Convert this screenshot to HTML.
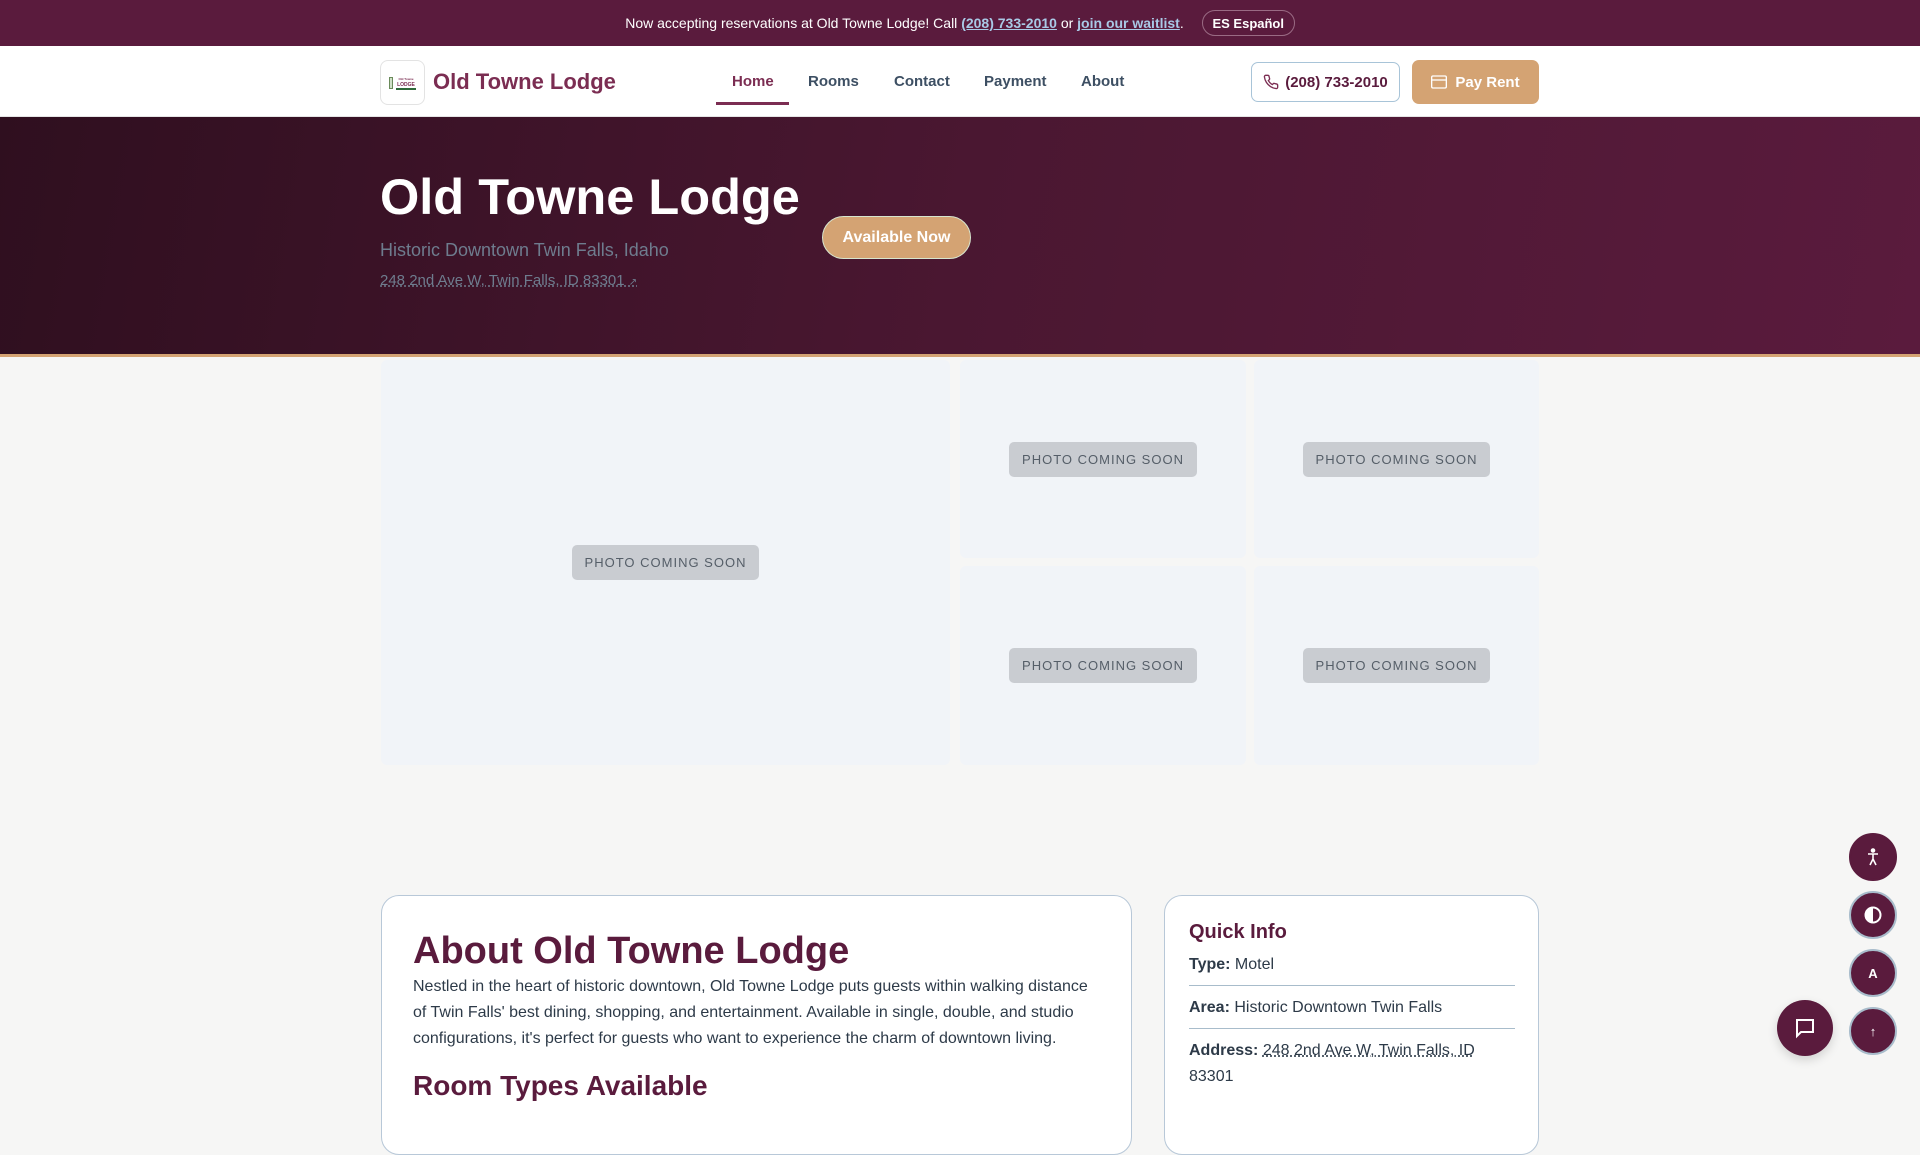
<!DOCTYPE html>
<html><head><meta charset="utf-8"><style>
*{box-sizing:border-box;margin:0;padding:0}
body{width:1920px;height:1080px;overflow:hidden;background:#f6f6f5;font-family:"Liberation Sans",sans-serif;position:relative}
.top{height:46px;background:#5a1b3d;color:#fff;font-size:14px;display:flex;align-items:center;justify-content:center;gap:18px}
.top a{color:#a9c9e6;font-weight:700;text-decoration:underline}
.es{width:93px;height:26px;border:1px solid #9a6b84;border-radius:13px;font-size:13px;font-weight:700;display:flex;align-items:center;justify-content:center}
.nav{height:71px;background:#fff;position:relative;border-bottom:1px solid #e5e5e5}
.logo{position:absolute;left:380px;top:14px;width:45px;height:45px;border:1px solid #e3e3e3;border-radius:8px;display:flex;align-items:center;justify-content:center;gap:3px}
.brand{position:absolute;left:433px;top:23px;font-size:22px;font-weight:700;color:#7b2d52}
.nl{position:absolute;top:27px;font-size:15px;font-weight:700;color:#3d4f63}
.home{color:#7b2d52}
.ul{position:absolute;left:716px;top:56px;width:73px;height:3px;background:#7b2d52}
.ph{position:absolute;left:1251px;top:16px;width:149px;height:40px;border:1px solid #a8c4d8;border-radius:7px;color:#5a1b3d;font-size:15px;font-weight:700;display:flex;align-items:center;justify-content:center;gap:6px}
.pay{position:absolute;left:1412px;top:14px;width:127px;height:44px;background:#d4a373;border-radius:7px;color:#fff;font-size:15px;font-weight:700;display:flex;align-items:center;justify-content:center;gap:8px}
.hero{position:absolute;top:117px;left:0;width:1920px;height:240px;background:linear-gradient(100deg,#2f0f1f 0%,#4a1731 50%,#5a1b3d 100%);border-bottom:3px solid #d4a373}
.hero h1{position:absolute;left:380px;top:50px;font-size:50.5px;color:#fff;font-weight:700}
.sub{position:absolute;left:380px;top:123px;font-size:18px;color:#6e7c8e}
.addr{position:absolute;left:380px;top:155px;font-size:15px;color:#6e7c8e;text-decoration:underline dotted}
.avail{position:absolute;left:822px;top:99px;width:149px;height:43px;border-radius:22px;background:#d4a373;border:1px solid #d7e6cf;color:#fff;font-size:16px;font-weight:700;display:flex;align-items:center;justify-content:center}
.tile{position:absolute;background:#f1f4f8;border-radius:6px;display:flex;align-items:center;justify-content:center}
.badge{background:#c9ccd1;color:#555e68;font-size:13px;letter-spacing:1px;padding:10px 13px;border-radius:5px}
.card{position:absolute;background:#fff;border:1px solid #b8c8d8;border-radius:18px}
.ab h2{position:absolute;left:31px;top:34px;font-size:38px;color:#5a1b3d}
.ab p{position:absolute;left:31px;top:78px;width:690px;font-size:16px;line-height:26px;color:#2d3a48}
.ab h3{position:absolute;left:31px;top:174px;font-size:28px;color:#5a1b3d}
.qi{font-size:16px;color:#2d3a48}
.fb{position:absolute;left:1849px;width:48px;height:48px;border-radius:50%;background:#5a1b3d;border:2px solid #a8bccb;color:#fff;display:flex;align-items:center;justify-content:center;font-size:13px;font-weight:700}
</style></head><body>
<div class="top"><span>Now accepting reservations at Old Towne Lodge! Call <a>(208) 733-2010</a> or <a>join our waitlist</a>.</span><div class="es">ES Español</div></div>
<div class="nav">
<div class="logo"><span style="width:4px;height:12px;background:#cfe0c8;border:1px solid #6a8a5a"></span><span style="display:flex;flex-direction:column;align-items:center;font-size:5px;color:#7b2d52;font-weight:700;line-height:6px"><span style="font-size:3px">Old Towne</span>LODGE<span style="width:20px;height:2px;background:#2f6a3a"></span></span></div>
<div class="brand">Old Towne Lodge</div>
<div class="nl home" style="left:732px">Home</div>
<div class="nl" style="left:808px">Rooms</div>
<div class="nl" style="left:894px">Contact</div>
<div class="nl" style="left:984px">Payment</div>
<div class="nl" style="left:1081px">About</div>
<div class="ul"></div>
<div class="ph"><svg width="16" height="16" viewBox="0 0 24 24" fill="none" stroke="#7b2d52" stroke-width="2"><path d="M22 16.9v3a2 2 0 0 1-2.2 2 19.8 19.8 0 0 1-8.6-3.1 19.5 19.5 0 0 1-6-6A19.8 19.8 0 0 1 2.1 4.2 2 2 0 0 1 4.1 2h3a2 2 0 0 1 2 1.7c.1.9.4 1.9.7 2.8a2 2 0 0 1-.5 2.1L8 9.900a16 16 0 0 0 6 6l1.3-1.3a2 2 0 0 1 2.1-.4c.9.3 1.8.6 2.8.7a2 2 0 0 1 1.7 2z"/></svg>(208) 733-2010</div>
<div class="pay"><svg width="16" height="14" viewBox="0 0 24 20" fill="none" stroke="#fff" stroke-width="2"><rect x="1" y="1" width="22" height="18" rx="2"/><path d="M1 7h22"/></svg>Pay Rent</div>
</div>
<div class="hero">
<h1>Old Towne Lodge</h1>
<div class="sub">Historic Downtown Twin Falls, Idaho</div>
<div class="addr">248 2nd Ave W, Twin Falls, ID 83301 <span style="font-size:10px">↗</span></div>
<div class="avail">Available Now</div>
</div>
<div class="tile" style="left:381px;top:360px;width:569px;height:405px"><span class="badge">PHOTO COMING SOON</span></div>
<div class="tile" style="left:960px;top:360px;width:286px;height:198px"><span class="badge">PHOTO COMING SOON</span></div>
<div class="tile" style="left:1254px;top:360px;width:285px;height:198px"><span class="badge">PHOTO COMING SOON</span></div>
<div class="tile" style="left:960px;top:566px;width:286px;height:199px"><span class="badge">PHOTO COMING SOON</span></div>
<div class="tile" style="left:1254px;top:566px;width:285px;height:199px"><span class="badge">PHOTO COMING SOON</span></div>
<div class="card ab" style="left:381px;top:895px;width:751px;height:260px">
<h2>About Old Towne Lodge</h2>
<p>Nestled in the heart of historic downtown, Old Towne Lodge puts guests within walking distance of Twin Falls' best dining, shopping, and entertainment. Available in single, double, and studio configurations, it's perfect for guests who want to experience the charm of downtown living.</p>
<h3>Room Types Available</h3>
</div>
<div class="card qi" style="left:1164px;top:895px;width:375px;height:260px">
<div style="position:absolute;left:24px;top:25px;font-size:20px;font-weight:700;color:#5a1b3d">Quick Info</div>
<div style="position:absolute;left:24px;top:60px"><b>Type:</b> Motel</div>
<div style="position:absolute;left:24px;top:89px;width:326px;border-top:1px solid #a8bccb"></div>
<div style="position:absolute;left:24px;top:103px"><b>Area:</b> Historic Downtown Twin Falls</div>
<div style="position:absolute;left:24px;top:132px;width:326px;border-top:1px solid #a8bccb"></div>
<div style="position:absolute;left:24px;top:142px;width:300px;line-height:26px"><b>Address:</b> <span style="text-decoration:underline dotted">248 2nd Ave W, Twin Falls, ID</span> 83301</div>
</div>
<div class="fb" style="top:833px;border-color:#5a1b3d"><svg width="14" height="18" viewBox="0 0 14 18" fill="none" stroke="#fff" stroke-width="1.6"><circle cx="7" cy="2.5" r="1.5" fill="#fff"/><path d="M2 6h10M7 6v5M7 11l-3 6M7 11l3 6"/></svg></div>
<div class="fb" style="top:891px"><svg width="18" height="18" viewBox="0 0 18 18"><circle cx="9" cy="9" r="7.5" fill="none" stroke="#fff" stroke-width="2"/><path d="M9 1.5a7.5 7.5 0 0 0 0 15z" fill="#fff"/></svg></div>
<div class="fb" style="top:949px">A</div>
<div class="fb" style="top:1007px">↑</div>
<div style="position:absolute;left:1777px;top:1000px;width:56px;height:56px;border-radius:50%;background:#5a1b3d;display:flex;align-items:center;justify-content:center;box-shadow:0 4px 10px rgba(0,0,0,.15)"><svg width="24" height="24" viewBox="0 0 24 24" fill="none" stroke="#fff" stroke-width="2"><path d="M4 4h16v12H8l-4 4z"/></svg></div>
</body></html>
